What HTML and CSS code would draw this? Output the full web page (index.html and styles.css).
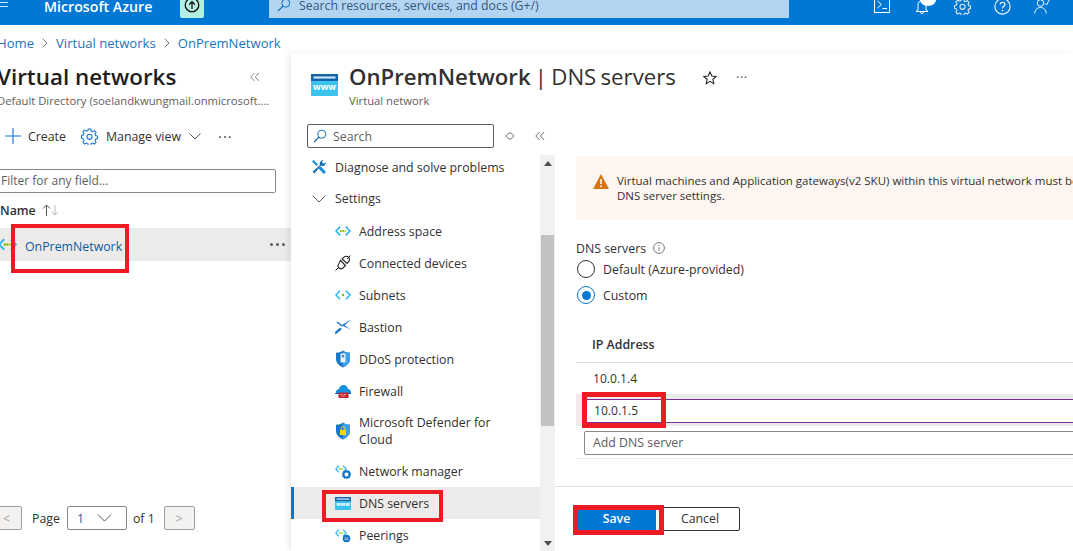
FILE: index.html
```html
<!DOCTYPE html>
<html lang="en">
<head>
<meta charset="utf-8">
<title>OnPremNetwork | DNS servers</title>
<link rel="stylesheet" href="styles.css">
</head>
<body>
<svg class="defs" width="0" height="0" aria-hidden="true">
  <defs>
    <symbol id="i-vnet" viewBox="0 0 16 16">
      <path d="M5.200 3.600 1 8l4.200 4.400" fill="none" stroke="#2cb5ec" stroke-width="1.600"/>
      <path d="M10.800 3.600 15 8l-4.200 4.400" fill="none" stroke="#2cb5ec" stroke-width="1.600"/>
      <circle cx="5.800" cy="8" r="1" fill="#7fba00"/><circle cx="8" cy="8" r="1" fill="#7fba00"/><circle cx="10.200" cy="8" r="1" fill="#b8d432"/>
    </symbol>
    <symbol id="i-www" viewBox="0 0 27 22">
      <rect width="27" height="22" fill="#3cc4ee"/>
      <rect width="27" height="7" fill="#1565a8"/>
      <rect x="2.500" y="2.500" width="22" height="2" fill="#d8eefb"/>
      <text x="13.500" y="16" class="www-text" text-anchor="middle">www</text>
    </symbol>
    <symbol id="i-shield" viewBox="0 0 16 18">
      <path d="M8 .5c2 1.600 4 2.200 7 2.300v6.200c0 4-3 6.800-7 8.500-4-1.700-7-4.500-7-8.500V2.800c3-.1 5-.7 7-2.300z" fill="#1b78c9"/>
      <path d="M8 .5c2 1.600 4 2.200 7 2.300v6.200c0 4-3 6.800-7 8.500z" fill="#3ea0e6"/>
    </symbol>
    <symbol id="i-gear" viewBox="0 0 16 16">
      <path d="M6.800 1h2.400l.4 1.900 1.300.6 1.700-1 1.600 1.700-1 1.600.5 1.300 1.800.5v2.400l-1.800.5-.5 1.300 1 1.600-1.600 1.700-1.700-1-1.300.6-.4 1.800H6.800l-.4-1.800-1.300-.6-1.700 1-1.600-1.700 1-1.600-.5-1.300L.5 9.500V7.100l1.800-.5.500-1.300-1-1.600 1.600-1.700 1.700 1 1.300-.6z" fill="none" stroke="currentColor" stroke-width="1"/>
      <circle cx="8" cy="8.300" r="2.400" fill="none" stroke="currentColor" stroke-width="1"/>
    </symbol>
  </defs>
</svg>

<div class="page">
  <header class="topbar">
    <div class="topbar-inner">
      <svg class="burger" viewBox="0 0 8 14" width="8" height="14"><path d="M0 3.500h8M0 7.500h8M0 11.500h8" stroke="#cfe4f6" stroke-width="1"/></svg>
      <span class="brand">Microsoft Azure</span>
      <span class="upgrade">
        <svg viewBox="0 0 16 16" width="16" height="16"><circle cx="8" cy="8" r="6.800" fill="none" stroke="#111" stroke-width="1.300"/><path d="M8 12V4.800M5.200 7.500 8 4.600l2.800 2.900" fill="none" stroke="#111" stroke-width="1.300"/></svg>
      </span>
      <div class="global-search">
        <svg viewBox="0 0 14 14" width="14" height="14"><circle cx="8.800" cy="5.200" r="4" fill="none" stroke="#0f6cbd" stroke-width="1"/><path d="M6 8 1 13" stroke="#0f6cbd" stroke-width="1.100"/></svg>
        <span>Search resources, services, and docs (G+/)</span>
      </div>
      <div class="top-icons">
        <svg class="ti-term" viewBox="0 0 16 16" width="16" height="16"><rect x=".5" y=".5" width="15" height="15" fill="none" stroke="#fff"/><path d="m3.500 4 3.800 3.500-3.800 3.500M8.500 11.500h4.500" fill="none" stroke="#fff"/></svg>
        <span class="ti-bell">
          <svg viewBox="0 0 14 16" width="14" height="16"><path d="M3 11V6c0-2.500 1.700-4.500 4-4.500S11 3.500 11 6v5l2 1.500H1z M5.500 13a1.500 1.500 0 0 0 3 0" fill="none" stroke="#fff"/></svg>
          <i class="bell-badge"></i>
        </span>
        <svg class="ti-gear" viewBox="0 0 16 16" width="17" height="17"><use href="#i-gear"/></svg>
        <svg class="ti-help" viewBox="0 0 16 16" width="17" height="17"><circle cx="8" cy="8" r="7.200" fill="none" stroke="#fff" stroke-width="1"/><path d="M5.800 6.200c0-1.300 1-2.200 2.300-2.200s2.200.9 2.200 2c0 1.800-2.300 1.800-2.300 3.800" fill="none" stroke="#fff" stroke-width="1.100"/><circle cx="8" cy="11.800" r=".8" fill="#fff"/></svg>
        <svg class="ti-feedback" viewBox="0 0 17 16" width="17" height="16"><circle cx="6.500" cy="5" r="3.300" fill="none" stroke="#fff"/><path d="M.8 15.500c0-3.500 2.400-6 5.700-6s5.700 2.500 5.700 6M11 5.500l1.500 1.500L16 .5" fill="none" stroke="#fff"/></svg>
      </div>
    </div>
  </header>

  <nav class="crumbs">
    <a>Home</a>
    <svg viewBox="0 0 6 10" width="6" height="10"><path d="m.7.700 4.300 4.300-4.300 4.300" fill="none" stroke="#777"/></svg>
    <a>Virtual networks</a>
    <svg viewBox="0 0 6 10" width="6" height="10"><path d="m.7.700 4.300 4.300-4.300 4.300" fill="none" stroke="#777"/></svg>
    <a>OnPremNetwork</a>
  </nav>

  <div class="workspace">
    <aside class="list-blade">
      <div class="list-title-row">
        <h2 class="list-title">Virtual networks</h2>
        <svg class="collapse" viewBox="0 0 10 10" width="10" height="10"><path d="M4.500 1 .8 5l3.700 4M9 1 5.300 5 9 9" fill="none" stroke="#8a8886"/></svg>
      </div>
      <div class="list-sub">Default Directory (soelandkwungmail.onmicrosoft....</div>
      <div class="list-toolbar">
        <svg viewBox="0 0 16 16" width="16" height="16"><path d="M8 0v16M0 8h16" stroke="#0f78d4" stroke-width="1.100"/></svg>
        <span class="tb-label tb-create">Create</span>
        <svg class="tb-gear" viewBox="0 0 16 16" width="17" height="17"><use href="#i-gear"/></svg>
        <span class="tb-label">Manage view</span>
        <svg class="tb-chev" viewBox="0 0 12 7" width="12" height="7"><path d="m.5.500 5.500 5.500 5.500-5.500" fill="none" stroke="#555"/></svg>
        <span class="tb-more">···</span>
      </div>
      <div class="filter">Filter for any field...</div>
      <div class="name-head">Name
        <svg viewBox="0 0 18 12" width="18" height="12"><path d="M4.500 12V1M1 4.500 4.500 1 8 4.500" fill="none" stroke="#555"/><path d="M13 1v10M9.800 8 13 11l3.200-3" fill="none" stroke="#bbb"/></svg>
      </div>
      <div class="list-row">
        <svg class="row-icon" viewBox="0 0 16 16" width="19" height="19"><use href="#i-vnet"/></svg>
        <a class="row-link">OnPremNetwork</a>
        <span class="row-more"><i></i><i></i><i></i></span>
      </div>
      <div class="pager">
        <span class="pg-btn pg-prev">&lt;</span>
        <span class="pg-text">Page</span>
        <span class="pg-select">1
          <svg viewBox="0 0 16 9" width="15" height="8"><path d="m.5.500 7.500 7.500 7.500-7.500" fill="none" stroke="#444"/></svg>
        </span>
        <span class="pg-text">of 1</span>
        <span class="pg-btn pg-next">&gt;</span>
      </div>
    </aside>

    <section class="detail-blade">
      <div class="detail-head">
        <svg class="head-icon" viewBox="0 0 27 22" width="27" height="22"><use href="#i-www"/></svg>
        <div class="head-text">
          <h1 class="detail-title"><b>OnPremNetwork</b> | DNS servers</h1>
          <div class="detail-sub">Virtual network</div>
        </div>
        <svg class="star" viewBox="0 0 16 16" width="14" height="14"><path d="m8 1 2.100 4.700 5 .5-3.800 3.300 1.100 5L8 11.900l-4.400 2.600 1.100-5L.9 6.200l5-.5z" fill="none" stroke="#222" stroke-width="1.200"/></svg>
        <span class="head-more">···</span>
      </div>
      <div class="menu-tools">
        <div class="menu-search">
          <svg viewBox="0 0 14 14" width="14" height="14"><circle cx="8.800" cy="5.200" r="4" fill="none" stroke="#0f6cbd"/><path d="M6 8 1.200 13" stroke="#0f6cbd" stroke-width="1.100"/></svg>
          Search
        </div>
        <svg class="mt-sort" viewBox="0 0 8 8" width="8" height="8"><path d="M4 .6 7.400 3v2L4 7.400.6 5V3z" fill="none" stroke="#777"/></svg>
        <svg class="mt-collapse" viewBox="0 0 10 10" width="10" height="10"><path d="M4.500 1 .8 5l3.700 4M9 1 5.300 5 9 9" fill="none" stroke="#777"/></svg>
      </div>
      <div class="blade-body">
        <div class="menu-col">
          <ul class="menu">
            <li class="menu-item first">
              <svg viewBox="0 0 16 16" width="16" height="16"><path d="M2.500 1 7 5.500 5.500 7 1 2.500M10 7.500 15 13l-2 2-5.500-5.500z" fill="#1490df"/><path d="M15 3.500c0 2.500-2.600 4.200-4.800 3L3.500 14.500 1.500 12.800 9 6c-1-2.300.7-5 3.500-5L10.800 3l1.700 1.800z" fill="#1a6fb5"/></svg>
              <span>Diagnose and solve problems</span>
            </li>
            <li class="menu-item group">
              <svg class="chev" viewBox="0 0 14 8" width="14" height="8"><path d="m.7.700 6.300 6.300 6.300-6.300" fill="none" stroke="#555"/></svg>
              <span>Settings</span>
            </li>
            <li class="menu-item sub"><svg viewBox="0 0 16 16" width="16" height="16"><use href="#i-vnet"/></svg><span>Address space</span></li>
            <li class="menu-item sub">
              <svg viewBox="0 0 16 16" width="16" height="16"><path d="M.5 15.500 4 12M12 4l3.500-3.500" stroke="#222" fill="none"/><path d="M5.500 5.500 10.500 10.500 8 13c-1.500 1-3 1-4 0s-1.200-3 0-4.500zM7 4l2.500-2.300c1.500-.7 3-.5 4 .5s1.200 2.500.5 4L12 8.500z" fill="none" stroke="#222" stroke-width="1.100"/></svg>
              <span>Connected devices</span>
            </li>
            <li class="menu-item sub"><svg viewBox="0 0 16 16" width="16" height="16"><path d="M5 3.800 1 8l4 4.200M11 3.800 15 8l-4 4.200" fill="none" stroke="#2cb5ec" stroke-width="1.600"/><circle cx="8" cy="8" r="1.200" fill="#7fba00"/></svg><span>Subnets</span></li>
            <li class="menu-item sub">
              <svg viewBox="0 0 16 16" width="16" height="16"><path d="M.5 15.500 7 10 5 8.800 0 13z" fill="#1272c4"/><path d="M15.500 1 9.500 6.200l6 4.300-7-3.300-1.500-1.200 8-5z M2 2.500 7 6" fill="#1272c4"/><path d="M2 3l5.500 4.300" stroke="#1272c4" stroke-width="1.400"/></svg>
              <span>Bastion</span>
            </li>
            <li class="menu-item sub">
              <svg viewBox="0 0 16 18" width="16" height="18"><use href="#i-shield"/><rect x="5.500" y="3.500" width="5" height="9" rx="1" fill="#e8f3fb"/><rect x="6.800" y="5" width="2.400" height="2.400" fill="#5a7f9e"/></svg>
              <span>DDoS protection</span>
            </li>
            <li class="menu-item sub">
              <svg viewBox="0 0 16 16" width="16" height="16"><path d="M1 10c-.4-2.200 1-3.700 3-3.900C4.600 3.500 6.500 2 8.500 2c2.300 0 4 1.600 4.300 3.800 1.900.2 3.200 1.700 3.200 3.500 0 .3 0 .5-.1.700z" fill="#1490df"/><path d="M0 10h16v1H0z" fill="#0f5fa8"/><rect x="3.500" y="9.500" width="10" height="5.500" fill="#c4262e"/><path d="M5 11.500h2M8.500 11.500h3M6 13h4" stroke="#f2b8b8" stroke-width=".7"/></svg>
              <span>Firewall</span>
            </li>
            <li class="menu-item sub tall">
              <svg viewBox="0 0 16 18" width="16" height="18"><use href="#i-shield"/><rect x="5" y="8" width="6" height="5" fill="#ffd400"/><path d="M6.200 8V6.500a1.800 1.800 0 0 1 3.600 0V8" fill="none" stroke="#ffd400"/></svg>
              <span>Microsoft Defender for<br>Cloud</span>
            </li>
            <li class="menu-item sub">
              <svg viewBox="0 0 16 16" width="16" height="16"><use href="#i-vnet" width="12" height="12"/><circle cx="11.500" cy="11.500" r="3" fill="none" stroke="#1272c4" stroke-width="2"/><circle cx="11.500" cy="11.500" r="4.300" fill="none" stroke="#1272c4" stroke-width="1" stroke-dasharray="1.500 1.200"/></svg>
              <span>Network manager</span>
            </li>
            <li class="menu-item sub active">
              <svg viewBox="0 0 27 22" width="16" height="13"><use href="#i-www"/></svg>
              <span>DNS servers</span>
            </li>
            <li class="menu-item sub">
              <svg viewBox="0 0 16 16" width="16" height="16"><use href="#i-vnet" width="12" height="12"/><circle cx="11.500" cy="11.500" r="3.800" fill="#1272c4"/><path d="M9.500 11h4M9.500 12.500h4" stroke="#d4e8f7" stroke-width=".7"/></svg>
              <span>Peerings</span>
            </li>
          </ul>
          <div class="scrollbar">
            <span class="sb-up"></span>
            <span class="sb-thumb"></span>
            <span class="sb-down"></span>
          </div>
        </div>
        <main class="dns-main">
          <div class="warning">
            <svg viewBox="0 0 16 15" width="16" height="15"><path d="M8 0 16 15H0z" fill="#d9730d"/><path d="M8 5v5" stroke="#fff" stroke-width="1.500"/><circle cx="8" cy="12.200" r=".9" fill="#fff"/></svg>
            <p>Virtual machines and Application gateways(v2 SKU) within this virtual network must be restarted to utilize the updated<br>DNS server settings.</p>
          </div>
          <div class="field-label">DNS servers
            <svg viewBox="0 0 12 12" width="12" height="12"><circle cx="6" cy="6" r="5.400" fill="none" stroke="#777"/><path d="M6 5.200v3.600" stroke="#777"/><circle cx="6" cy="3.400" r=".7" fill="#777"/></svg>
          </div>
          <div class="radio-row"><span class="radio"></span>Default (Azure-provided)</div>
          <div class="radio-row custom"><span class="radio on"></span>Custom</div>
          <div class="ip-head">IP Address</div>
          <div class="ip-row">10.0.1.4</div>
          <div class="ip-edit"><div class="ip-input">10.0.1.5</div></div>
          <div class="ip-add-wrap"><div class="ip-add">Add DNS server</div></div>
          <div class="footer">
            <span class="btn btn-primary">Save</span>
            <span class="btn btn-default">Cancel</span>
          </div>
        </main>
      </div>
    </section>
  </div>

  <span class="mark mark-link"></span>
  <span class="mark mark-dns"></span>
  <span class="mark mark-ip"></span>
  <span class="mark mark-save"></span>
</div>
</body>
</html>
```
FILE: styles.css
```css
* { box-sizing: border-box; }
html, body { margin: 0; padding: 0; background: #fff; }
body { font-family: "Open Sans", "Liberation Sans", sans-serif; font-size: 12.35px; color: #323130; }
.defs { position: absolute; }
.www-text { font: 700 9px "Open Sans", sans-serif; fill: #fff; }
ul { list-style: none; margin: 0; padding: 0; }
h1, h2, p { margin: 0; font-weight: 400; }
svg { display: block; flex: none; }

.page { position: relative; width: 1073px; height: 551px; overflow: hidden; background: #fff; }

/* top bar */
.topbar { height: 25px; background: #0078d4; overflow: hidden; }
.topbar-inner { display: flex; align-items: center; height: 33px; margin-top: -15px; position: relative; }
.burger { margin-left: 0; }
.brand { margin-left: 36px; width: 136px; padding-top: 9px; color: #fff; font-weight: 600; font-size: 14.2px; white-space: nowrap; }
.upgrade { width: 24px; height: 33px; background: #b3f0df; border-radius: 2px; display: flex; align-items: center; justify-content: center; padding-top: 7px; }
.global-search { margin-left: 65px; width: 520px; height: 33px; background: #b3d5f2; padding: 7px 0 0 8px; display: flex; align-items: center; gap: 8px; color: #35587a; font-size: 12.3px; }
.top-icons { position: relative; margin-left: 85px; display: flex; align-items: center; height: 33px; padding-top: 12px; color: #e3eef8; }
.ti-term { margin-top: -6px; }
.ti-bell { position: relative; margin-left: 25px; margin-top: -2px; display: block; }
.bell-badge { position: absolute; right: -7px; top: -5px; width: 16px; height: 12px; border-radius: 50%; background: #fff; }
.ti-gear { margin-left: 25px; margin-top: -3px; }
.ti-help { margin-left: 23px; margin-top: -3px; }
.ti-feedback { margin-left: 23px; margin-top: -3px; }

/* breadcrumb */
.crumbs { height: 28px; padding-top: 7px; margin-left: -3px; display: flex; align-items: center; gap: 8px; font-size: 13.1px; }
.crumbs a { color: #1a75bc; }

.workspace { display: flex; height: 498px; }

/* left blade */
.list-blade { width: 291px; flex: none; height: 498px; display: flex; flex-direction: column; }
.list-title-row { display: flex; align-items: center; height: 28px; margin-top: 10px; margin-left: -3px; }
.list-title { font-size: 22.4px; font-weight: 600; color: #1f1e1d; white-space: nowrap; width: 253px; line-height: 28px; }
.list-sub { height: 18px; margin-top: 1px; margin-left: -3px; font-size: 11.25px; line-height: 18px; color: #605e5c; white-space: nowrap; }
.list-toolbar { margin-top: 14px; height: 24px; padding-left: 5px; display: flex; align-items: center; width: 271px; color: #323130; }
.tb-create { margin-left: 7px; }
.tb-gear { margin-left: 15px; margin-right: 8px; color: #0f78d4; }
.tb-chev { margin-left: 8px; }
.tb-more { margin-left: 17px; font-size: 15px; letter-spacing: 1px; color: #444; line-height: 10px; }
.filter { margin-top: 21px; width: 280px; height: 24px; margin-left: -4px; padding-left: 4px; border: 1px solid #8a8886; border-radius: 2px; line-height: 22px; font-size: 12px; color: #605e5c; }
.name-head { margin-top: 7px; height: 20px; display: flex; align-items: center; gap: 6px; font-weight: 600; color: #323130; }
.list-row { margin-top: 8px; height: 33px; background: #edebe9; display: flex; align-items: center; padding-right: 6px; }
.row-icon { margin-left: -2px; margin-right: 8px; }
.row-link { color: #0f5c9e; padding-top: 4px; }
.row-more { margin-left: auto; display: flex; gap: 2.500px; }
.row-more i { width: 3.500px; height: 3.500px; border-radius: 50%; background: #605e5c; }
.pager { margin-top: auto; margin-bottom: 21px; display: flex; align-items: center; height: 24px; margin-left: -9px; }
.pg-btn { width: 31px; height: 24px; background: #f3f2f1; border: 1px solid #a19f9d; border-radius: 2px; display: flex; align-items: center; justify-content: center; color: #a19f9d; font-size: 12px; }
.pg-prev { margin-right: 10px; }
.pg-select { width: 60px; height: 24px; margin: 0 6px 0 7px; border: 1px solid #8a8886; border-radius: 2px; display: flex; align-items: center; justify-content: space-between; padding: 0 14px 0 9px; color: #1a5a90; }
.pg-next { margin-left: 9px; }

/* detail blade */
.detail-blade { flex: 1; min-width: 0; box-shadow: -3px 0 6px rgba(0, 0, 0, .07); position: relative; background: #fff; }
.detail-head { height: 71px; padding-left: 20px; display: flex; align-items: flex-start; }
.head-icon { margin-top: 21px; }
.head-text { margin-left: 11px; margin-top: 9px; }
.detail-title { font-size: 22.2px; line-height: 30px; color: #323130; white-space: nowrap; width: 347px; word-spacing: -1.5px; }
.detail-title b { font-weight: 600; }
.detail-sub { font-size: 11.25px; line-height: 18px; color: #605e5c; }
.star { margin-left: 7px; margin-top: 18px; }
.head-more { margin-left: 19px; margin-top: 14px; font-size: 13px; letter-spacing: .5px; color: #555; line-height: 20px; }
.menu-tools { height: 31px; padding-left: 16px; display: flex; align-items: flex-start; }
.menu-search { width: 187px; height: 24px; border: 1px solid #605e5c; border-radius: 2px; display: flex; align-items: center; gap: 6px; padding-left: 5px; color: #605e5c; }
.mt-sort { margin: 8px 0 0 12px; }
.mt-collapse { margin: 7px 0 0 21px; }

.blade-body { display: flex; height: 396px; }
.menu-col { width: 264px; flex: none; display: flex; height: 396px; overflow: hidden; }
.menu { width: 249px; flex: none; }
.menu-item { height: 32px; display: flex; align-items: center; gap: 8px; padding-left: 20px; color: #323130; line-height: 17px; position: relative; }
.menu-item.first { height: 24px; margin-bottom: 3px; }
.menu-item.group { height: 33px; }
.menu-item.sub { padding-left: 44px; }
.menu-item.tall { height: 48px; }
.menu-item.group .chev { margin-left: 1px; margin-right: 1px; }
.menu-item.active { background: #edebe9; }
.menu-item.active::before { content: ""; position: absolute; left: 0; top: 0; bottom: 0; width: 3px; background: #0078d4; }

.scrollbar { width: 15px; flex: none; background: #f1f1f1; position: relative; display: flex; flex-direction: column; align-items: center; }
.sb-up { margin-top: 6px; width: 0; height: 0; border: 4px solid transparent; border-top: 0; border-bottom: 5px solid #505050; }
.sb-thumb { margin-top: 69px; width: 13px; height: 191px; background: #c1c1c1; }
.sb-down { position: absolute; bottom: 5px; left: 3.500px; width: 0; height: 0; border: 4px solid transparent; border-bottom: 0; border-top: 5px solid #505050; }

/* dns main */
.dns-main { flex: 1; min-width: 0; padding: 1px 0 0 21px; overflow: hidden; white-space: nowrap; }
.warning { height: 64px; width: 800px; background: #fdf6f0; display: flex; align-items: flex-start; gap: 8px; padding: 17px 0 0 17px; font-size: 11.5px; line-height: 15px; color: #323130; }
.warning svg { margin-top: 1px; }
.field-label { margin-top: 19px; height: 18px; display: flex; align-items: center; gap: 7px; }
.radio-row { height: 22px; margin-top: 1px; display: flex; align-items: center; gap: 8px; }
.radio-row.custom { margin-top: 4px; }
.radio { width: 18px; height: 18px; margin-left: 1px; border-radius: 50%; border: 1px solid #323130; display: flex; align-items: center; justify-content: center; }
.radio.on { border-color: #0078d4; }
.radio.on::after { content: ""; width: 9px; height: 9px; border-radius: 50%; background: #0078d4; }
.ip-head { margin-top: 20px; height: 37px; width: 800px; padding: 11px 0 0 16px; border-bottom: 1px solid #e1dfdd; font-weight: 600; line-height: 16px; }
.ip-row { height: 31px; line-height: 31px; padding-left: 17px; font-size: 12.1px; }
.ip-edit { height: 32px; width: 800px; background: #edebe9; padding: 5px 0 0 10px; }
.ip-input { height: 24px; background: #fff; border-top: 1px solid #7e2d9c; border-bottom: 1px solid #7e2d9c; line-height: 22px; padding-left: 8px; font-size: 12.1px; }
.ip-add-wrap { width: 800px; height: 33px; padding: 5px 0 0 8px; border-bottom: 1px solid #edebe9; }
.ip-add { height: 24px; border: 1px solid #8a8886; border-radius: 2px; padding-left: 8px; line-height: 22px; color: #605e5c; }
.footer { margin-left: -21px; margin-top: 27px; width: 820px; border-top: 1px solid #e1dfdd; padding: 20px 0 0 20px; display: flex; gap: 4px; }
.btn { height: 24px; display: flex; align-items: center; justify-content: center; border-radius: 2px; padding-bottom: 1px; }
.btn-primary { width: 81px; background: #0078d4; color: #fff; font-weight: 600; padding-left: 2px; }
.btn-default { width: 80px; background: #fff; border: 1px solid #323130; color: #323130; }

/* red annotations drawn over the screenshot */
.mark { position: absolute; border: 4px solid #ed1c24; pointer-events: none; }
.mark-link { left: 11px; top: 224px; width: 118px; height: 49px; }
.mark-dns { left: 322px; top: 490px; width: 121px; height: 32px; }
.mark-ip { left: 582px; top: 392px; width: 84px; height: 36px; border-width: 5px; }
.mark-save { left: 573px; top: 505px; width: 91px; height: 30px; border-width: 5px; }
```
